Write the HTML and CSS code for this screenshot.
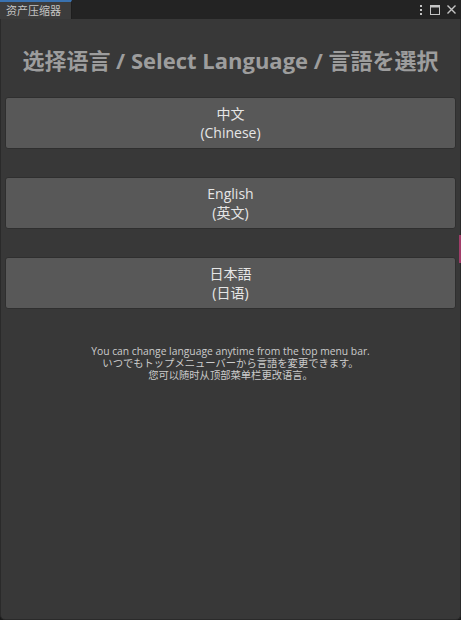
FILE: index.html
```html
<!DOCTYPE html>
<html lang="zh-CN">
<head>
<meta charset="utf-8">
<title>资产压缩器</title>
<link rel="stylesheet" href="styles.css">
</head>
<body>
<div class="window">
  <div class="tabbar">
    <div class="tab">资产压缩器</div>
    <div class="tab-actions">
      <svg class="ico" width="6" height="12" viewBox="0 0 6 12"><rect x="2" y="1" width="2" height="2" fill="#c4c4c4"/><rect x="2" y="5" width="2" height="2" fill="#c4c4c4"/><rect x="2" y="9" width="2" height="2" fill="#c4c4c4"/></svg>
      <svg class="ico" width="12" height="12" viewBox="0 0 12 12"><rect x="1.5" y="1.5" width="9" height="9" fill="none" stroke="#c4c4c4" stroke-width="1"/><rect x="1" y="1" width="10" height="2.5" fill="#c4c4c4"/></svg>
      <svg class="ico" width="11" height="11" viewBox="0 0 11 11"><path d="M1.5 1.5 L9.5 9.5 M9.5 1.5 L1.5 9.5" stroke="#c4c4c4" stroke-width="1.4" fill="none"/></svg>
    </div>
  </div>
  <div class="panel">
    <h1 class="title">选择语言 / Select Language / <span lang="ja">言語を選択</span></h1>
    <div class="buttons">
      <button class="lang-btn">中文<br>(Chinese)</button>
      <button class="lang-btn">English<br>(英文)</button>
      <button class="lang-btn" lang="ja">日本語<br><span lang="zh-CN">(日语)</span></button>
    </div>
    <div class="hint">
      <p class="hint-line">You can change language anytime from the top menu bar.</p>
      <p class="hint-line" lang="ja">いつでもトップメニューバーから言語を変更できます。</p>
      <p class="hint-line">您可以随时从顶部菜单栏更改语言。</p>
    </div>
  </div>
  <div class="edge-accent"></div>
</div>
</body>
</html>
```
FILE: styles.css
```css
html, body {
  margin: 0;
  padding: 0;
  background: #191919;
}
body {
  width: 461px;
  height: 620px;
  overflow: hidden;
  font-family: "Open Sans", "Noto Sans CJK SC", sans-serif;
}
:lang(ja) {
  font-family: "Open Sans", "Noto Sans CJK JP", sans-serif;
}
.window {
  position: relative;
  display: flex;
  flex-direction: column;
  height: 620px;
}
.tabbar {
  display: flex;
  align-items: stretch;
  height: 19px;
  background: #232323;
  flex: none;
}
.tab {
  width: 72px;
  box-sizing: border-box;
  background: #3c3c3c;
  border-top: 2px solid #3a72b0;
  border-right: 1px solid #1e1e1e;
  color: #c4c4c4;
  font-size: 11px;
  line-height: 17px;
  padding-left: 6px;
  white-space: nowrap;
}
.tab-actions {
  margin-left: auto;
  display: flex;
  align-items: center;
  gap: 5px;
  padding-right: 4px;
}
.ico {
  display: block;
}
.panel {
  flex: 1;
  background: #383838;
  border: 1px solid #2a2a2a;
  border-top: none;
  border-radius: 0 0 5px 5px;
  padding: 0 4px;
  display: flex;
  flex-direction: column;
}
.title {
  margin: 26px 0 0;
  text-align: center;
  color: #9d9d9d;
  font-size: 22px;
  font-weight: 700;
  line-height: 30px;
  white-space: nowrap;
}
.buttons {
  margin-top: 22px;
  display: flex;
  flex-direction: column;
  gap: 28px;
}
.lang-btn {
  height: 52px;
  margin: 0;
  padding: 0;
  background: #585858;
  border: 1px solid #2f2f2f;
  border-radius: 3px;
  color: #e6e6e6;
  font-family: inherit;
  font-size: 14px;
  line-height: 19px;
  text-align: center;
}
.lang-btn:lang(ja) {
  font-family: "Open Sans", "Noto Sans CJK JP", sans-serif;
}
.hint {
  margin-top: 36px;
  display: flex;
  flex-direction: column;
  align-items: center;
}
.hint-line {
  margin: 0;
  text-align: center;
  color: #cbcbcb;
  font-size: 10.3px;
  line-height: 12px;
  white-space: nowrap;
}
.edge-accent {
  position: absolute;
  right: 0;
  top: 235px;
  width: 2px;
  height: 28px;
  background: #a03c68;
}
```
